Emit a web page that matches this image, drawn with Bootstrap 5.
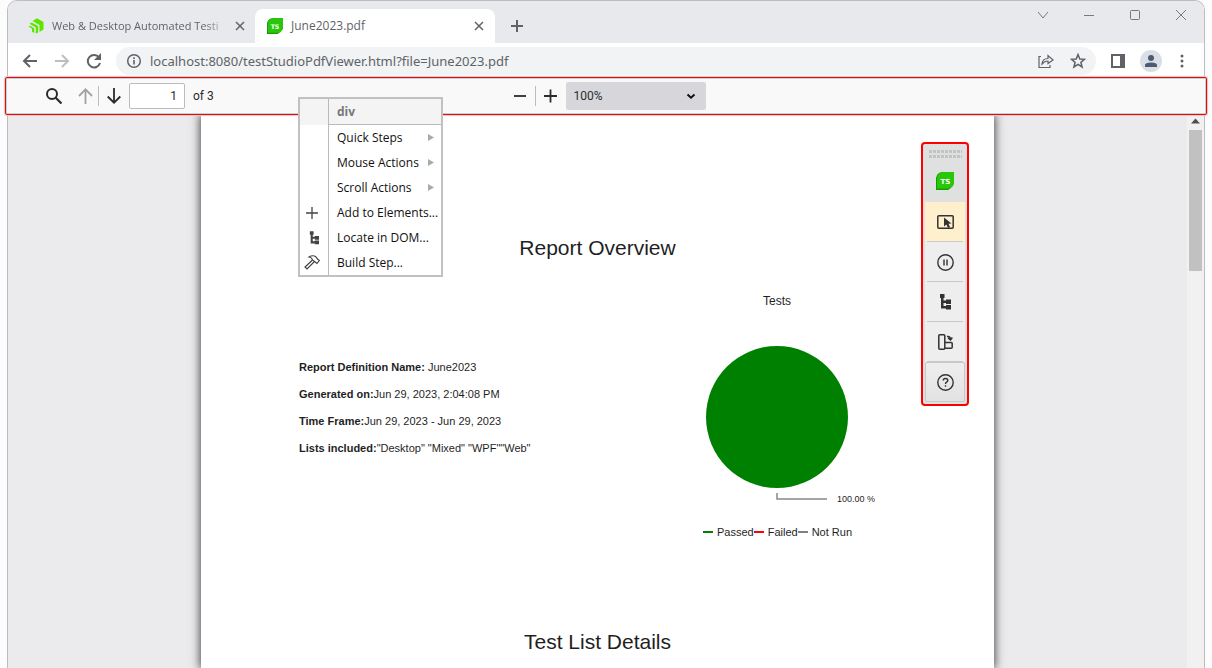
<!DOCTYPE html>
<html lang="en">
<head>
<meta charset="utf-8">
<meta name="viewport" content="width=device-width, initial-scale=1">
<title>June2023.pdf</title>
<link href="https://cdn.jsdelivr.net/npm/bootstrap@5.3.0/dist/css/bootstrap.min.css" rel="stylesheet">
<style>
  :root { --ui: "Open Sans", "Noto Sans", sans-serif; --doc: "Liberation Sans", Arial, sans-serif; }
  body { background: #fcfcfc; font-family: var(--ui); font-size: 12px; line-height: 16px; color: #202124; }
  button { background: none; border: 0; padding: 0; color: inherit; }
  svg { display: block; flex: none; }
  .browser { margin: 0 7px; border: 1px solid #bdbdbd; border-bottom: 0; border-radius: 10px 10px 0 0; background: #fff; }
  .tabstrip { height: 42px; background: #e8e9ed; border-radius: 9px 9px 0 0; color: #5f6368; }
  .tab { height: 34px; width: 240px; padding: 0 11px 0 12px; gap: 8px; }
  .tab.first-tab { width: 247px; padding-left: 20px; padding-right: 10px; }
  .tab.current { background: #fff; border-radius: 8px 8px 0 0; }
  .tab a { color: #5f6368; text-decoration: none; white-space: nowrap; min-width: 0; }
  .tab a.fade-end { font-size: 11px; -webkit-mask-image: linear-gradient(to right, #000 86%, rgba(0,0,0,.15)); mask-image: linear-gradient(to right, #000 86%, rgba(0,0,0,.15)); }
  .winbtns { gap: 30px; height: 28px; padding-right: 15px; color: #77797c; }
  .addressbar { height: 34px; color: #5f6368; padding: 2px 16px 0 14px; gap: 14px; }
  .omnibox { height: 28px; border-radius: 14px; background: #f1f3f4; padding: 0 10px; }
  .omnibox input { border: 0; background: none; outline: 0; padding: 0; font-family: "Noto Sans", sans-serif; font-size: 13px; color: #5f6368; width: 100%; }
  .avatar { width: 22px; height: 22px; border-radius: 50%; background: #dadfe5; color: #4d5a70; }
  .viewerbar { height: 38px; margin: 0 -3px; border: 1px solid #f00; border-radius: 2px; background: #f9f9fa;
    box-shadow: inset 0 0 0 1px #cfcfcf, 0 0 1px 1px #cfcfcf; padding: 0 34px 0 40px;
    display: grid; grid-template-columns: 1fr auto 1fr; align-items: center; position: relative; z-index: 2;
    color: #2b2b2e; }
  .viewerbar label, .viewerbar input, .viewerbar select { font-family: Roboto, "Open Sans", sans-serif; }
  .bar-rule { width: 1px; height: 20px; background: #bcbcbe; }
  .pagebox { width: 56px; height: 26px; border: 1px solid #bbbbbc; border-radius: 2px; text-align: right; padding: 0 7px; background: #fff; color: #2b2b2e; }
  .zoombox { width: 140px; height: 28px; border: 0; border-radius: 2px; background-color: #d7d7db; padding: 0 8px; font-size: 12px; color: #2b2b2e; appearance: none; }
  .zoomwrap svg { position: absolute; right: 10px; top: 11px; pointer-events: none; }
  .viewport { background: #ebebed; height: calc(100vh - 115px); position: relative; overflow: hidden; }
  .sheet { width: 793px; background: #fff; font-family: var(--doc); color: #1f1f1f; box-shadow: 0 0 9px 1px rgba(0,0,0,.7); padding: 119px 119px 0 98px; font-size: 11px; }
  .sheet h1 { font-size: 21px; line-height: 28px; margin: 0 -119px 0 -98px; }
  .sheet h1.later { margin-top: 88px; }
  .facts { gap: 11px; padding-top: 73px; }
  .chart { width: 196px; padding-top: 7px; }
  .chart svg { margin-top: 32px; }
  .chart .caption-text { font-size: 12px; }
  .dash { width: 10px; height: 2px; }
  .scroller { width: 17px; background: #f1f1f1; }
  .thumb { width: 13px; height: 141px; background: #c1c1c1; }
  .ctxmenu { position: absolute; left: 292px; top: 19px; width: 145px; background: #fff; border: 2px solid #c1c1c3; color: #111; }
  .ctxmenu li { height: 25px; display: grid; grid-template-columns: 29px 1fr; }
  .ctxmenu li.head { height: 26px; background: #f4f4f4; color: #777; font-weight: 700; }
  .ctxmenu .glyph { border-right: 1px solid #bbb; display: flex; align-items: center; justify-content: center; padding-right: 4px; color: #444; }
  .ctxmenu .act, .ctxmenu .cap { display: flex; align-items: center; justify-content: space-between; padding: 0 7px 0 8px; white-space: nowrap; }
  .ctxmenu .cap { border-bottom: 1px solid #bbb; }
  .recorder { position: absolute; top: 27px; right: 235px; width: 48px; border: 2px solid #f00; border-radius: 4px; background: #dfe1e1; padding: 0 2px 2px; color: #333; }
  .recorder button { height: 40px; width: 100%; display: flex; align-items: center; justify-content: center; background: #eee; position: relative; }
  .recorder button.ruled::after { content: ""; position: absolute; left: 2px; right: 2px; bottom: 0; height: 1px; background: #c9c9c9; }
  .recorder .picked { background: #fff0cd; }
  .recorder .help { border: 1px solid #c8c8c8; border-radius: 2px; background: linear-gradient(#eee, #e2e2e2); }
  .grip { height: 16px; padding-top: 6px; }
</style>
</head>
<body class="overflow-hidden">
<svg width="0" height="0" class="position-absolute" aria-hidden="true">
  <symbol id="ts" viewBox="0 0 18 18"><path d="M0 6L1 3Q3 0 7 0H18V11Q17 15 12 18H0Z" fill="#179b00"/><path d="M1 7Q1 0 8 0H18V10Q18 15 12 16.500H1Z" fill="#28c70a"/></symbol>
  <symbol id="x" viewBox="0 0 10 10"><path d="M1 1L9 9M9 1L1 9" stroke="currentColor" stroke-width="1.500"/></symbol>
  <symbol id="tree" viewBox="0 0 12 16"><path d="M1 0H5.500V4H4.500V6.500H7V5.500H12V10H7V9H4.500V12H7V11H12V15.500H7V14.500H2V4H1Z" fill="currentColor"/></symbol>
</svg>
<main class="browser">
  <header class="tabstrip d-flex align-items-end">
    <div class="tab first-tab d-flex align-items-center">
      <svg width="16" height="16" viewBox="0 0 16 16" fill="#5ce500"><path d="M4.500 3L9 .3L15.500 4V11.500L11.500 14V7Z"/><path d="M1.500 5.800L3.500 4.500L10.200 8V14.500L7.800 15.800V9.500Z"/><path d="M.5 8.500L2 7.700L6.300 10.200V15L4 13.800V10.800Z"/></svg>
      <a href="#" class="flex-grow-1 fade-end">Web &amp; Desktop Automated Testi</a>
      <button aria-label="Close tab"><svg width="10" height="10"><use href="#x"/></svg></button>
    </div>
    <div class="tab current d-flex align-items-center">
      <svg width="16" height="16" viewBox="0 0 18 18"><use href="#ts"/><text x="9" y="12" font-size="7" font-weight="700" fill="#fff" text-anchor="middle" font-family="DejaVu Sans">TS</text></svg>
      <a href="#" class="flex-grow-1">June2023.pdf</a>
      <button aria-label="Close tab"><svg width="10" height="10"><use href="#x"/></svg></button>
    </div>
    <button class="align-self-center ms-3 mt-2" aria-label="New tab"><svg width="12" height="12" viewBox="0 0 12 12"><path d="M6 0V12M0 6H12" stroke="currentColor" stroke-width="2"/></svg></button>
    <div class="winbtns ms-auto d-flex align-items-center align-self-start">
      <button aria-label="Search tabs"><svg width="16" height="12" viewBox="0 0 16 12" fill="none" stroke="currentColor"><path d="M3 3L8 9L13 3"/></svg></button>
      <button aria-label="Minimize"><svg width="16" height="12" viewBox="0 0 16 12"><path d="M3 6.500H13" stroke="currentColor"/></svg></button>
      <button aria-label="Maximize"><svg width="16" height="12" viewBox="0 0 16 12" fill="none" stroke="currentColor"><rect x="3.500" y="1.500" width="9" height="9" rx="1"/></svg></button>
      <button aria-label="Close"><svg width="16" height="12" viewBox="0 0 16 12"><path d="M3 1L13 11M13 1L3 11" stroke="currentColor"/></svg></button>
    </div>
  </header>

  <nav class="addressbar d-flex align-items-center">
    <div class="d-flex align-items-center gap-3">
      <button aria-label="Back"><svg width="16" height="14" viewBox="0 0 16 14" fill="none" stroke="currentColor" stroke-width="2"><path d="M15 7H2M8 1L2 7L8 13"/></svg></button>
      <button aria-label="Forward"><svg width="16" height="14" viewBox="0 0 16 14" fill="none" stroke="#bcbec1" stroke-width="2"><path d="M1 7H14M8 1L14 7L8 13"/></svg></button>
      <button aria-label="Reload"><svg width="16" height="16" viewBox="0 0 16 16"><path d="M13 4.500A6.200 6.200 0 1 0 14 10" fill="none" stroke="currentColor" stroke-width="2"/><path d="M15 0V7H8Z" fill="currentColor"/></svg></button>
    </div>
    <div class="omnibox d-flex align-items-center flex-grow-1 gap-2">
      <svg width="16" height="16" viewBox="0 0 16 16"><circle cx="8" cy="8" r="6.300" fill="none" stroke="currentColor" stroke-width="1.500"/><path d="M8 7V11.500M8 4.300V6" stroke="currentColor" stroke-width="1.600"/></svg>
      <input aria-label="Address" value="localhost:8080/testStudioPdfViewer.html?file=June2023.pdf">
      <button class="me-2" aria-label="Share"><svg width="16" height="16" viewBox="0 0 16 16" fill="none" stroke="currentColor" stroke-width="1.200"><path d="M3 3.500H1V14.500H12V12"/><path d="M4 11Q4.500 5.500 10 5.500V2.500L15 7L10 10.500V8Q6.500 8 4 11Z"/></svg></button>
      <button aria-label="Bookmark"><svg width="16" height="16" viewBox="0 0 16 16" fill="none" stroke="currentColor" stroke-width="1.500"><path d="M8 1.500L9.800 6L14.500 6.300L10.900 9.300L12.100 14L8 11.400L3.900 14L5.100 9.300L1.500 6.300L6.200 6Z"/></svg></button>
    </div>
    <button aria-label="Side panel"><svg width="16" height="14" viewBox="0 0 16 14"><path d="M1 0H15V14H1ZM3 2V12H10V2Z" fill="currentColor" fill-rule="evenodd"/></svg></button>
    <button class="avatar d-flex align-items-center justify-content-center" aria-label="Profile"><svg width="12" height="12" viewBox="0 0 12 12" fill="currentColor"><circle cx="6" cy="3" r="3"/><path d="M0 12V10Q0 7.500 6 7.500T12 10V12Z"/></svg></button>
    <button aria-label="Menu" class="px-1"><svg width="4" height="14" viewBox="0 0 4 14" fill="currentColor"><circle cx="2" cy="2" r="1.500"/><circle cx="2" cy="7" r="1.500"/><circle cx="2" cy="12" r="1.500"/></svg></button>
  </nav>

  <div class="viewerbar" role="toolbar">
    <div class="d-flex align-items-center">
      <button class="me-3" aria-label="Find"><svg width="16" height="16" viewBox="0 0 16 16" fill="none" stroke="currentColor" stroke-width="2"><circle cx="6" cy="6" r="5"/><path d="M9.500 9.500L15.500 15.500" stroke-width="2.200"/></svg></button>
      <button class="me-1" aria-label="Previous page"><svg width="16" height="16" viewBox="0 0 16 16" fill="none" stroke="#a2a2a4" stroke-width="1.800"><path d="M7.500 16V1M1 8L7.500 1.300L14 8"/></svg></button>
      <span class="bar-rule me-2"></span>
      <button class="me-2" aria-label="Next page"><svg width="14" height="16" viewBox="0 0 14 16" fill="none" stroke="currentColor" stroke-width="1.800"><path d="M7 0V15M.7 8.500L7 14.700L13.300 8.500"/></svg></button>
      <input class="pagebox" id="pageNo" value="1"><label class="ms-1 ps-1" for="pageNo">of 3</label>
    </div>
    <div class="d-flex align-items-center gap-2">
      <button aria-label="Zoom out"><svg width="14" height="14" viewBox="0 0 14 14"><path d="M1 7H13" stroke="currentColor" stroke-width="1.800"/></svg></button>
      <span class="bar-rule"></span>
      <button aria-label="Zoom in"><svg width="14" height="14" viewBox="0 0 14 14"><path d="M0 7H13M6.500 .5V13.500" stroke="currentColor" stroke-width="1.800"/></svg></button>
      <div class="zoomwrap position-relative d-flex"><select class="zoombox" aria-label="Zoom"><option>100%</option></select><svg width="10" height="7" viewBox="0 0 10 7"><path d="M1.500 1.500L5 4.700L8.500 1.500" fill="none" stroke="#111" stroke-width="2"/></svg></div>
    </div>
    <ul class="ctxmenu list-unstyled m-0">
      <li class="head"><span class="glyph"></span><span class="cap">div</span></li>
      <li><span class="glyph"></span><button class="act">Quick Steps <svg width="6" height="7" viewBox="0 0 6 7"><path d="M0 0L6 3.500L0 7Z" fill="#aaa"/></svg></button></li>
      <li><span class="glyph"></span><button class="act">Mouse Actions <svg width="6" height="7" viewBox="0 0 6 7"><path d="M0 0L6 3.500L0 7Z" fill="#aaa"/></svg></button></li>
      <li><span class="glyph"></span><button class="act">Scroll Actions <svg width="6" height="7" viewBox="0 0 6 7"><path d="M0 0L6 3.500L0 7Z" fill="#aaa"/></svg></button></li>
      <li><span class="glyph"><svg width="12" height="12" viewBox="0 0 12 12"><path d="M6 0V12M0 6H12" stroke="currentColor" stroke-width="1.300"/></svg></span><button class="act">Add to Elements...</button></li>
      <li><span class="glyph ps-1"><svg width="10" height="14"><use href="#tree"/></svg></span><button class="act">Locate in DOM...</button></li>
      <li><span class="glyph"><svg width="16" height="15" viewBox="0 0 16 15" fill="none" stroke="currentColor" stroke-width="1.200"><path d="M8.500 5L1 12L3 14L10.500 6.500"/><path d="M5 2Q9 -.5 12 2L13.500 4L15.300 5.500L13 8.500L10.500 6.500L8.500 5Q8 2.500 5 2Z"/></svg></span><button class="act">Build Step...</button></li>
    </ul>
  </div>

  <div class="viewport d-flex">
    <div class="flex-grow-1 d-flex justify-content-center">
      <article class="sheet">
        <h1 class="text-center fw-normal">Report Overview</h1>
        <div class="d-flex justify-content-between pt-4">
          <div class="facts d-flex flex-column">
            <div><b>Report Definition Name:</b> June2023</div>
            <div><b>Generated on:</b>Jun 29, 2023, 2:04:08 PM</div>
            <div><b>Time Frame:</b>Jun 29, 2023 - Jun 29, 2023</div>
            <div><b>Lists included:</b>"Desktop" "Mixed" "WPF""Web"</div>
          </div>
          <div class="chart">
            <div class="text-center caption-text">Tests</div>
            <svg width="196" height="183" viewBox="0 0 196 183" role="img" aria-label="Tests passed">
              <circle cx="98" cy="76" r="71" fill="green"/>
              <path d="M98 152V158H148" fill="none" stroke="#888" stroke-width="1.500"/>
              <text x="158" y="161" font-size="9" fill="#1f1f1f">100.00 %</text>
            </svg>
            <div class="d-flex align-items-center text-nowrap ms-4">
              <span class="dash me-1" style="background:green"></span>Passed
              <span class="dash me-1" style="background:red"></span>Failed
              <span class="dash me-1" style="background:gray"></span>Not Run
            </div>
          </div>
        </div>
        <h1 class="text-center fw-normal later">Test List Details</h1>
      </article>
    </div>
    <div class="scroller d-flex flex-column align-items-center">
      <svg width="9" height="15" viewBox="0 0 9 15"><path d="M0 8.500L4.500 3.500L9 8.500Z" fill="#505050"/></svg>
      <div class="thumb"></div>
    </div>

    <aside class="recorder">
      <div class="grip d-flex justify-content-center"><svg width="33" height="8"><path d="M0 1.500H33M0 6.500H33" stroke="#c2c4c4" stroke-width="3" stroke-dasharray="3 1"/></svg></div>
      <div class="d-flex justify-content-center pt-2 pb-2 my-1"><svg width="18" height="18" viewBox="0 0 18 18"><use href="#ts"/><text x="9.500" y="12" font-size="7" font-weight="700" fill="#fff" text-anchor="middle" font-family="DejaVu Sans">TS</text></svg></div>
      <button class="picked ruled" aria-label="Highlight element"><svg width="17" height="14" viewBox="0 0 17 14"><rect x=".8" y=".8" width="15.400" height="12.400" rx="1" fill="none" stroke="#333" stroke-width="1.500"/><path d="M7 2.500V11.500L9.300 9.500L11 13L13 12L11.500 8.800L14.500 8.500Z" fill="#333"/></svg></button>
      <button class="ruled" aria-label="Pause"><svg width="17" height="17" viewBox="0 0 17 17" fill="none" stroke="currentColor" stroke-width="1.400"><circle cx="8.500" cy="8.500" r="7.700"/><path d="M7 5.500V11.500M10 5.500V11.500"/></svg></button>
      <button class="ruled" aria-label="DOM tree"><svg width="12" height="16"><use href="#tree"/></svg></button>
      <button class="ruled" aria-label="Swap panels"><svg width="15" height="16" viewBox="0 0 15 16" fill="none" stroke="currentColor" stroke-width="1.500"><rect x=".8" y=".8" width="6" height="14.400" rx="1"/><path d="M7 8.500H13.200Q14.200 8.500 14.200 9.500V13.200Q14.200 14.200 13.200 14.200H7M9 2.500Q12 2 12.500 5M10 4L12.500 6L14.300 3.500"/></svg></button>
      <button class="help" aria-label="Help"><svg width="17" height="17" viewBox="0 0 17 17" fill="none" stroke="currentColor" stroke-width="1.400"><circle cx="8.500" cy="8.500" r="7.700"/><path d="M6.200 6.500Q6.200 4.500 8.500 4.500T10.800 6.400Q10.800 7.500 9.600 8.100Q8.500 8.700 8.500 10M8.500 11.200V12.700"/></svg></button>
    </aside>
  </div>
</main>
<script src="https://cdn.jsdelivr.net/npm/bootstrap@5.3.0/dist/js/bootstrap.bundle.min.js"></script>
</body>
</html>
